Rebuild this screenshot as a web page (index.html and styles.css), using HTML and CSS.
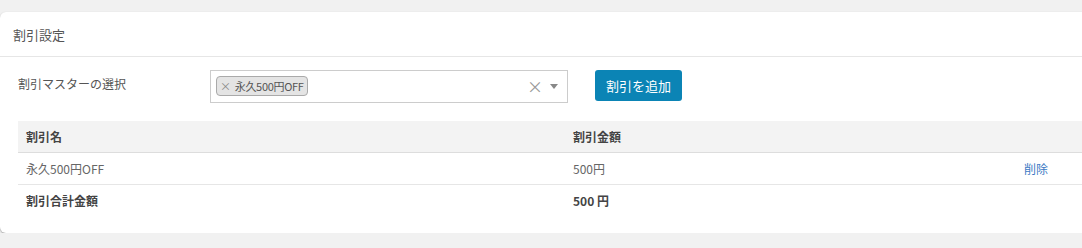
FILE: index.html
```html
<!DOCTYPE html>
<html lang="ja">
  <head>
    <meta charset="UTF-8" />
    <meta name="viewport" content="width=device-width, initial-scale=1.0" />
    <title>割引設定</title>
    <link rel="stylesheet" href="styles.css">
  </head>
  <body>
    <div class="card">
      <div class="card-head">割引設定</div>
      <div class="card-body">
        <div class="form-row">
          <label class="form-label">割引マスターの選択</label>
          <div class="select">
            <span class="tag"><span class="tag-x">×</span>永久500円OFF</span>
            <span class="select-clear">×</span>
            <span class="select-arrow"></span>
          </div>
          <button class="btn">割引を追加</button>
        </div>
        <table class="list">
          <colgroup>
            <col class="c-name" />
            <col class="c-amount" />
            <col />
          </colgroup>
          <tr>
            <th>割引名</th>
            <th>割引金額</th>
            <th></th>
          </tr>
          <tr>
            <td>永久500円OFF</td>
            <td>500円</td>
            <td><a href="#" class="del">削除</a></td>
          </tr>
          <tr class="total">
            <td>割引合計金額</td>
            <td>500 円</td>
            <td></td>
          </tr>
        </table>
      </div>
    </div>
  </body>
</html>
```

FILE: styles.css
```css
* { box-sizing: border-box; }
body { margin: 0; background: #f1f1f1; font-family: "Noto Sans CJK JP", "Noto Sans", sans-serif; color: #555; font-size: 12px; }

.card { margin-top: 12px; width: 1110px; height: 221px; background: #fff; border-radius: 6px 0 0 6px; box-shadow: 0 1px 2px rgba(0,0,0,0.35); }
.card-head { height: 45px; padding: 0 13px; display: flex; align-items: center; font-size: 13px; color: #555; border-bottom: 1px solid #e6e6e6; }
.card-body { padding: 13px 18px 0 18px; }

.form-row { display: flex; align-items: flex-start; }
.form-label { width: 192px; padding-top: 5px; color: #555; }
.select { position: relative; width: 358px; height: 33px; border: 1px solid #ccc; padding: 5px 5px; }
.tag { display: inline-flex; align-items: center; height: 20px; padding: 0 3px; background: #e4e4e4; border: 1px solid #aaa; border-radius: 4px; font-size: 11px; letter-spacing: -0.3px; color: #555; }
.tag-x { color: #888; margin-right: 4px; font-size: 11px; }
.select-clear { position: absolute; right: 24px; top: 5px; color: #999; font-size: 16px; line-height: 20px; }
.select-arrow { position: absolute; right: 9px; top: 13px; border-left: 4px solid transparent; border-right: 4px solid transparent; border-top: 5px solid #888; }
.btn { margin-left: 27px; width: 87px; height: 31px; border: 0; border-radius: 3px; background: #0b84b5; color: #fff; font-family: inherit; font-size: 13px; }

.list { margin-top: 18px; width: 100%; border-collapse: collapse; }
.c-name { width: 547px; }
.c-amount { width: 451px; }
.list th, .list td { height: 32px; padding: 0 8px; text-align: left; font-size: 12px; }
.list th { height: 31px; background: #f3f3f3; color: #444; font-weight: bold; border-bottom: 1px solid #ddd; }
.list td { color: #666; border-bottom: 1px solid #e6e6e6; }
.list .total td { color: #444; font-weight: bold; border-bottom: 0; }
.del { color: #3b79c4; text-decoration: none; }
```
